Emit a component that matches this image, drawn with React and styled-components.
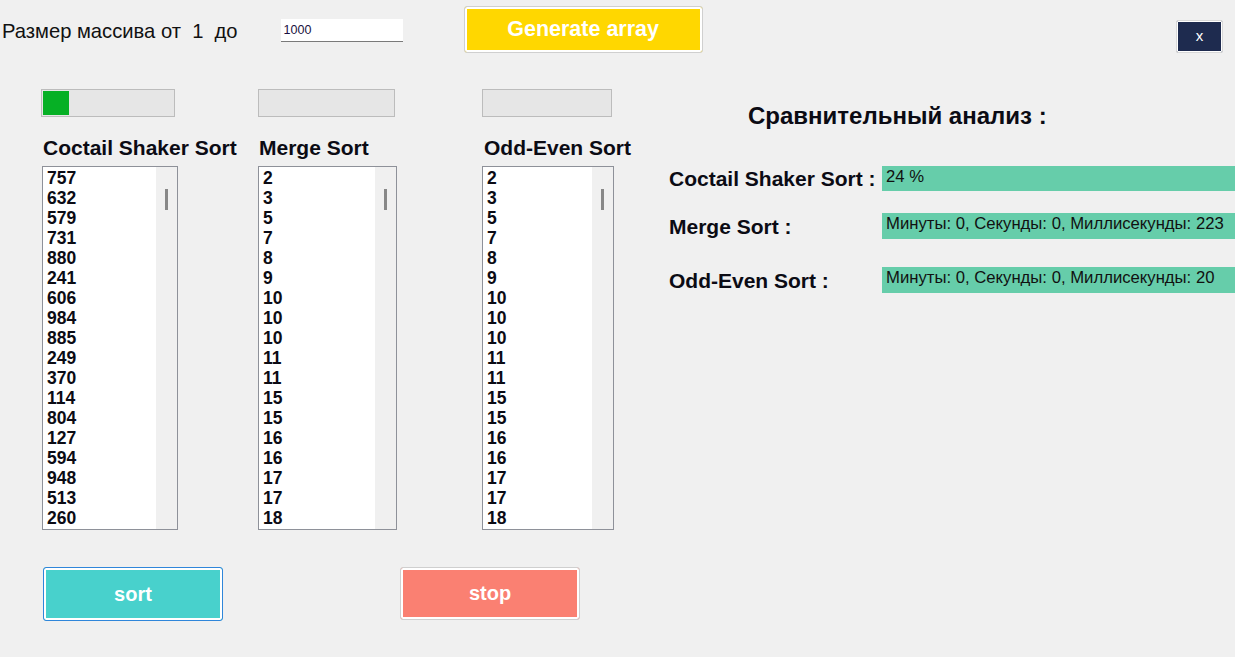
import React from "react";
import styled, { createGlobalStyle } from "styled-components";

const GlobalStyle = createGlobalStyle`
  html, body {
    margin: 0;
    padding: 0;
    background: #f0f0f0;
    font-family: "Liberation Sans", Arial, sans-serif;
    color: #000;
  }
  * { box-sizing: border-box; }
`;

const Page = styled.div`
  width: 1235px;
  height: 657px;
  overflow: hidden;
  background: #f0f0f0;
`;

const Toolbar = styled.div`
  display: flex;
  align-items: center;
  height: 53px;
  padding: 6px 0 0 2px;
`;

const SizeLabel = styled.span`
  font-size: 20.2px;
  white-space: pre;
  color: #111;
  padding-top: 3px;
`;

const SizeInput = styled.div`
  margin-left: 43px;
  margin-top: 2px;
  width: 122px;
  height: 23px;
  background: #fff;
  border-bottom: 1px solid #7a7a7a;
  font-size: 12.5px;
  padding: 4px 0 0 3px;
  color: #1a1040;
`;

const ActionButton = styled.button`
  display: flex;
  align-items: center;
  justify-content: center;
  margin-left: ${(p) => p.$ml || 0}px;
  width: ${(p) => p.$w}px;
  height: ${(p) => p.$h}px;
  background: ${(p) => p.$bg};
  border: 1px solid ${(p) => p.$border || "#cfcfcf"};
  border-radius: 3px;
  box-shadow: inset 0 0 0 2px #fff;
  color: #fff;
  font-family: "Liberation Sans", Arial, sans-serif;
  font-weight: bold;
  font-size: ${(p) => p.$fs || 20}px;
  padding: 0;
`;

const CloseButton = styled.button`
  align-self: flex-end;
  margin-left: auto;
  margin-right: 12px;
  width: 47px;
  height: 33px;
  background: #1e2b4f;
  border: 1px solid #d8d8d8;
  border-radius: 2px;
  box-shadow: inset 0 0 0 1px #fff;
  color: #fff;
  font-family: "Liberation Sans", Arial, sans-serif;
  font-size: 15px;
  padding: 0 0 2px;
`;

const Main = styled.div`
  display: flex;
  margin-top: 36px;
`;

const Column = styled.div`
  display: flex;
  flex-direction: column;
  margin-left: ${(p) => p.$ml}px;
  width: ${(p) => p.$w}px;
`;

const Progress = styled.div`
  width: ${(p) => p.$w}px;
  height: 28px;
  background: #e6e6e6;
  border: 1px solid #bcbcbc;
  padding: 1px;
`;

const ProgressFill = styled.div`
  height: 100%;
  background: #06b025;
`;

const ColumnTitle = styled.div`
  margin-top: 19px;
  padding-left: ${(p) => p.$pl}px;
  font-size: 21px;
  font-weight: bold;
  line-height: 24px;
  white-space: nowrap;
  color: #0b0b14;
`;

const ListBox = styled.div`
  display: flex;
  margin-top: 6px;
  margin-left: ${(p) => p.$ml || 0}px;
  width: ${(p) => p.$w}px;
  height: 364px;
  background: #fff;
  border: 1px solid #8e9199;
`;

const ListItems = styled.div`
  flex: 1;
  overflow: hidden;
  padding: 1px 0 0 4px;
  font-size: 17.5px;
  font-weight: bold;
  line-height: 20px;
  color: #0b0b14;
`;

const ScrollTrack = styled.div`
  width: 21px;
  background: #f0f0f0;
  display: flex;
  justify-content: center;
  padding-top: 22px;
`;

const ScrollThumb = styled.div`
  width: 3px;
  height: 21px;
  background: #888;
`;

const Analysis = styled.div`
  margin-left: 55px;
  flex: 1;
  display: flex;
  flex-direction: column;
  padding-top: 14px;
`;

const AnalysisTitle = styled.div`
  padding-left: 79px;
  font-size: 24px;
  font-weight: bold;
  line-height: 26px;
  color: #0b0b14;
`;

const ResultRow = styled.div`
  display: grid;
  grid-template-columns: 213px 1fr;
  align-items: center;
  margin-top: ${(p) => p.$mt}px;
`;

const ResultLabel = styled.div`
  font-size: 21px;
  font-weight: bold;
  line-height: 24px;
  padding-top: 2px;
  white-space: nowrap;
  color: #0b0b14;
`;

const ResultBar = styled.div`
  height: ${(p) => p.$h}px;
  background: #66cdaa;
  font-size: 16.7px;
  padding: 2px 0 0 4px;
  line-height: 18px;
  white-space: nowrap;
  overflow: hidden;
  color: #111;
`;

const BottomRow = styled.div`
  display: flex;
  padding-left: 43px;
  margin-top: 37px;
`;

const list1 = [757, 632, 579, 731, 880, 241, 606, 984, 885, 249, 370, 114, 804, 127, 594, 948, 513, 260];
const sorted = [2, 3, 5, 7, 8, 9, 10, 10, 10, 11, 11, 15, 15, 16, 16, 17, 17, 18];

const columns = [
  { title: "Coctail Shaker Sort", ml: 41, w: 137, pw: 134, lw: 136, lml: 1, tpl: 2, fill: 26, items: list1 },
  { title: "Merge Sort", ml: 80, w: 139, pw: 137, lw: 139, lml: 0, tpl: 1, fill: 0, items: sorted },
  { title: "Odd-Even Sort", ml: 85, w: 132, pw: 130, lw: 132, lml: 0, tpl: 2, fill: 0, items: sorted },
];

const results = [
  { label: "Coctail Shaker Sort :", text: "24 %", mt: 36, h: 25 },
  { label: "Merge Sort :", text: "Минуты: 0, Секунды: 0, Миллисекунды: 223", mt: 22, h: 26 },
  { label: "Odd-Even Sort :", text: "Минуты: 0, Секунды: 0, Миллисекунды: 20", mt: 28, h: 26 },
];

export default function App() {
  return (
    <Page>
      <GlobalStyle />
      <Toolbar>
        <SizeLabel>{"Размер массива от  1  до"}</SizeLabel>
        <SizeInput>1000</SizeInput>
        <ActionButton $ml={61} $w={239} $h={47} $bg="#ffd700" $fs={21.5}>
          Generate array
        </ActionButton>
        <CloseButton>x</CloseButton>
      </Toolbar>
      <Main>
        {columns.map((c) => (
          <Column key={c.title} $ml={c.ml} $w={c.w}>
            <Progress $w={c.pw}>
              {c.fill > 0 && <ProgressFill style={{ width: c.fill }} />}
            </Progress>
            <ColumnTitle $pl={c.tpl}>{c.title}</ColumnTitle>
            <ListBox $w={c.lw} $ml={c.lml}>
              <ListItems>
                {c.items.map((v, i) => (
                  <div key={i}>{v}</div>
                ))}
              </ListItems>
              <ScrollTrack>
                <ScrollThumb />
              </ScrollTrack>
            </ListBox>
          </Column>
        ))}
        <Analysis>
          <AnalysisTitle>Сравнительный анализ :</AnalysisTitle>
          {results.map((r) => (
            <ResultRow key={r.label} $mt={r.mt}>
              <ResultLabel>{r.label}</ResultLabel>
              <ResultBar $h={r.h}>{r.text}</ResultBar>
            </ResultRow>
          ))}
        </Analysis>
      </Main>
      <BottomRow>
        <ActionButton $w={180} $h={54} $bg="#48d1cc" $border="#2f86da">
          sort
        </ActionButton>
        <ActionButton $ml={177} $w={180} $h={53} $bg="#fa8072">
          stop
        </ActionButton>
      </BottomRow>
    </Page>
  );
}
